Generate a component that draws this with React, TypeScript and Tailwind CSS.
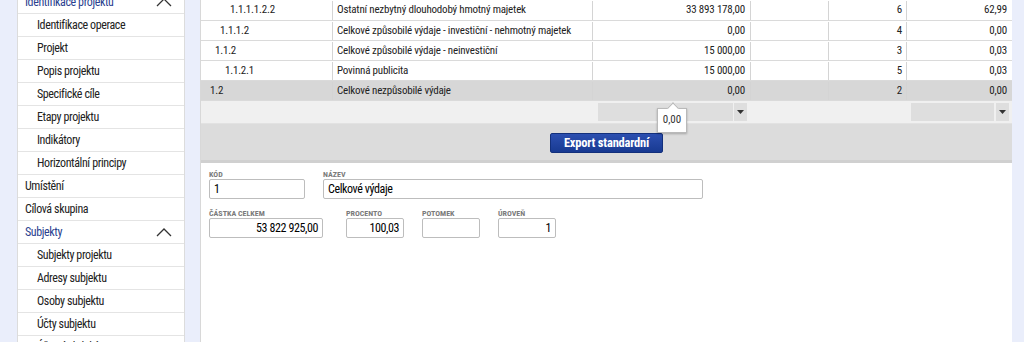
import React from "react";

const font = { fontFamily: '"Liberation Sans Narrow", "Roboto Condensed", "Roboto", sans-serif' };

function ChevronUp() {
  return (
    <svg width="16" height="10" viewBox="0 0 16 10" className="text-[#333]">
      <path d="M1 9 L8 2 L15 9" fill="none" stroke="currentColor" strokeWidth="1.3" />
    </svg>
  );
}

const sideItems: { label: string; level: number; blue?: boolean; chevron?: boolean }[] = [
  { label: "Identifikace projektu", level: 0, blue: true, chevron: true },
  { label: "Identifikace operace", level: 1 },
  { label: "Projekt", level: 1 },
  { label: "Popis projektu", level: 1 },
  { label: "Specifické cíle", level: 1 },
  { label: "Etapy projektu", level: 1 },
  { label: "Indikátory", level: 1 },
  { label: "Horizontální principy", level: 1 },
  { label: "Umístění", level: 0 },
  { label: "Cílová skupina", level: 0 },
  { label: "Subjekty", level: 0, blue: true, chevron: true },
  { label: "Subjekty projektu", level: 1 },
  { label: "Adresy subjektu", level: 1 },
  { label: "Osoby subjektu", level: 1 },
  { label: "Účty subjektu", level: 1 },
  { label: "Účetní období", level: 1 },
];

const rows = [
  { code: "1.1.1.1.2.2", pad: "pl-[29px]", name: "Ostatní nezbytný dlouhodobý hmotný majetek", amt: "33 893 178,00", n: "6", pct: "62,99" },
  { code: "1.1.1.2", pad: "pl-[19px]", name: "Celkové způsobilé výdaje - investiční - nehmotný majetek", amt: "0,00", n: "4", pct: "0,00" },
  { code: "1.1.2", pad: "pl-[14px]", name: "Celkové způsobilé výdaje - neinvestiční", amt: "15 000,00", n: "3", pct: "0,03" },
  { code: "1.1.2.1", pad: "pl-[24px]", name: "Povinná publicita", amt: "15 000,00", n: "5", pct: "0,03" },
  { code: "1.2", pad: "pl-[9px]", name: "Celkové nezpůsobilé výdaje", amt: "0,00", n: "2", pct: "0,00", gray: true },
];

function Caret() {
  return (
    <div className="w-[13px] h-[18px] bg-[#dedede] flex items-center justify-center">
      <svg width="7" height="4" viewBox="0 0 7 4"><path d="M0 0 L7 0 L3.5 4 Z" fill="#333" /></svg>
    </div>
  );
}

function Field({ label, value, w, right }: { label: string; value: string; w: string; right?: boolean }) {
  return (
    <div className="flex flex-col">
      <div className="text-[8px] font-bold text-[#7a7a7a] leading-[9px] h-[9px] mb-[-1px] uppercase">{label}</div>
      <div className={`${w} h-[20px] mt-[1px] border border-[#bdbdbd] rounded-[2px] bg-white text-[12px] tracking-[-0.4px] text-black leading-[18px] px-[4px] ${right ? "text-right" : ""}`}>{value}</div>
    </div>
  );
}

export default function App() {
  return (
    <div className="w-[1024px] h-[342px] overflow-hidden bg-[#eaeefb] flex text-[#222]" style={font}>
      {/* sidebar */}
      <div className="ml-[17px] w-[168px] h-[380px] mt-[-9px] bg-white border-x border-[#dcdcdc] flex flex-col">
        {sideItems.map((it, i) => (
          <div
            key={i}
            className={`h-[23px] shrink-0 border-b border-[#e4e4e4] flex items-center justify-between text-[12px] tracking-[-0.4px] ${it.level ? "pl-[19px]" : "pl-[7px]"} pr-[12px] ${it.blue ? "text-[#2b3f8f]" : "text-[#222]"}`}
          >
            <span>{it.label}</span>
            {it.chevron && <ChevronUp />}
          </div>
        ))}
      </div>

      {/* main */}
      <div className="ml-[15px] w-[812px] h-[342px] bg-white flex flex-col border-l border-[#d8d8d8] relative">
        {/* table */}
        <div className="flex flex-col text-[11px] tracking-[-0.2px]">
          {rows.map((r, i) => (
            <div
              key={i}
              className={`flex ${i === 0 ? "h-[21px]" : "h-[20px]"} border-b border-[#dadada] pt-[1px] ${r.gray ? "bg-[#d7d7d7]" : "bg-white"}`}
            >
              <div className={`w-[132px] border-r border-[#d4d4d4] flex items-center ${r.pad}`}>{r.code}</div>
              <div className="w-[260px] border-r border-[#d4d4d4] flex items-center pl-[4px]">{r.name}</div>
              <div className="w-[158px] border-r border-[#d4d4d4] flex items-center justify-end pr-[5px]">{r.amt}</div>
              <div className="w-[78px] border-r border-[#d4d4d4]"></div>
              <div className="w-[78px] border-r border-[#d4d4d4] flex items-center justify-end pr-[4px]">{r.n}</div>
              <div className="flex-1 flex items-center justify-end pr-[5px]">{r.pct}</div>
            </div>
          ))}
          {/* filter row */}
          <div className="h-[23px] bg-[#f0f0f0] border-b border-[#e2e2e2] flex items-center">
            <div className="w-[392px]"></div>
            <div className="flex items-center gap-[1px] ml-[5px]">
              <div className="w-[135px] h-[18px] bg-[#dedede]"></div>
              <Caret />
            </div>
            <div className="flex items-center gap-[2px] ml-[164px]">
              <div className="w-[83px] h-[18px] bg-[#dedede]"></div>
              <Caret />
            </div>
          </div>
        </div>

        {/* gray band with button */}
        <div className="h-[39px] bg-[#dcdcdc] border-b-[3px] border-[#d0d0d0] flex justify-center pt-[9px]">
          <button className="h-[20px] w-[113px] rounded-[2px] bg-gradient-to-b from-[#2c4fb0] to-[#183a92] border border-[#13307c] text-white text-[12.5px] tracking-[-0.2px] font-bold leading-[18px]">
            Export standardní
          </button>
        </div>

        {/* form */}
        <div className="flex flex-col gap-[2px] pl-[8px] pt-[7px]">
          <div className="flex gap-[18px]">
            <Field label="Kód" value="1" w="w-[96px]" />
            <Field label="Název" value="Celkové výdaje" w="w-[380px]" />
          </div>
          <div className="flex mt-[8px]">
            <Field label="Částka celkem" value="53 822 925,00" w="w-[114px]" right />
            <div className="ml-[23px]"><Field label="Procento" value="100,03" w="w-[58px]" right /></div>
            <div className="ml-[18px]"><Field label="Potomek" value="" w="w-[58px]" right /></div>
            <div className="ml-[18px]"><Field label="Úroveň" value="1" w="w-[58px]" right /></div>
          </div>
        </div>

        {/* tooltip */}
        <div className="absolute left-[456px] top-[108px] w-[30px] h-[25px] bg-white border border-[#b9b9b9] shadow-[0_1px_2px_rgba(0,0,0,0.25)] flex items-center justify-center text-[11px] text-[#333]">
          0,00
          <div className="absolute left-[11px] top-[-5px] w-[8px] h-[8px] bg-white border-l border-t border-[#b9b9b9] rotate-45"></div>
        </div>
      </div>
    </div>
  );
}
